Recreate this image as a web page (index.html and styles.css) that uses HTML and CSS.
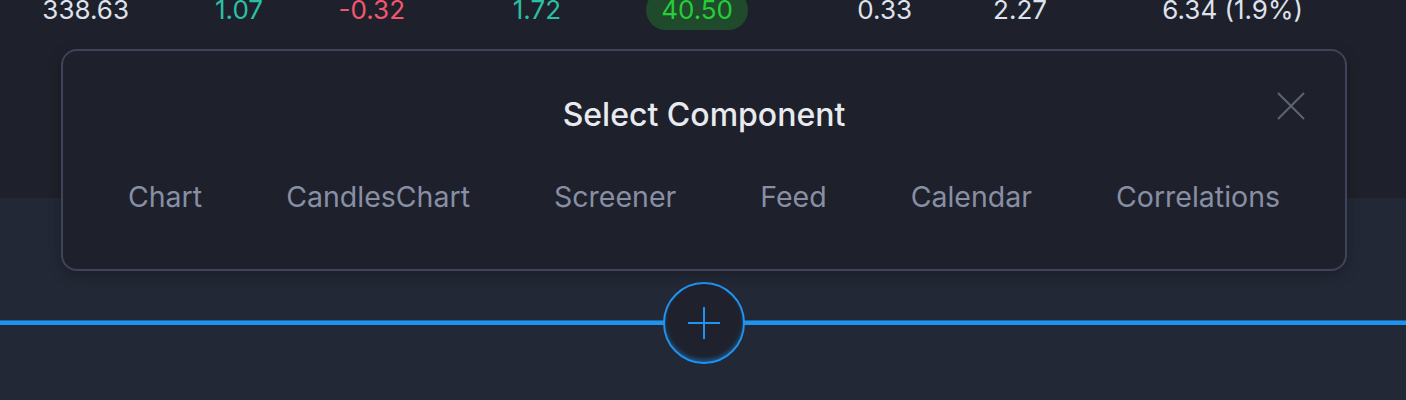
FILE: index.html
```html
<!DOCTYPE html>
<html>
<head>
  <meta charset="UTF-8" />
  <title>Layout</title>
  <link rel="stylesheet" href="styles.css">
</head>
<body>
  <div class="page">
    <div class="stats-panel">
      <div class="stats-row">
        <span class="stat">338.63</span>
        <span class="stat up">1.07</span>
        <span class="stat down">-0.32</span>
        <span class="stat up">1.72</span>
        <span class="stat"><span class="pill">40.50</span></span>
        <span class="stat">0.33</span>
        <span class="stat">2.27</span>
        <span class="stat">6.34 (1.9%)</span>
      </div>
    </div>

    <div class="workspace">
      <div class="splitter">
        <div class="splitter-line"></div>
        <button class="add-btn" aria-label="Add component">
          <svg width="34" height="34" viewBox="0 0 34 34">
            <path d="M17 1v32M1 17h32" stroke="#1f93ef" stroke-width="2" fill="none"/>
          </svg>
        </button>
      </div>
    </div>

    <div class="modal">
      <button class="modal-close" aria-label="Close">
        <svg width="28" height="28" viewBox="0 0 28 28">
          <path d="M1 1l26 26M27 1L1 27" stroke="#5d6376" stroke-width="2" fill="none"/>
        </svg>
      </button>
      <h2 class="modal-title">Select Component</h2>
      <ul class="component-list">
        <li>Chart</li>
        <li>CandlesChart</li>
        <li>Screener</li>
        <li>Feed</li>
        <li>Calendar</li>
        <li>Correlations</li>
      </ul>
    </div>
  </div>
</body>
</html>
```

FILE: styles.css
```css
body {
  margin: 0;
  background: #232836;
  font-family: Inter, "Noto Sans", sans-serif;
  overflow: hidden;
}
.page {
  position: relative;
  width: 1406px;
  height: 400px;
}
.stats-panel {
  background: #1e212b;
  height: 198px;
  overflow: hidden;
}
.stats-row {
  display: grid;
  grid-template-columns: 129px 134px 142px 156px 187px 164px 135px 256px;
  margin-top: -10px;
  height: 40px;
  line-height: 40px;
  font-size: 26px;
  color: #dfe2ec;
}
.stat {
  text-align: right;
}
.stat.up {
  color: #2bbfa4;
}
.stat.down {
  color: #f4566f;
}
.pill {
  display: inline-block;
  background: #1f4a2b;
  color: #27cc3a;
  border-radius: 20px;
  padding: 0 15px;
}
.workspace {
  height: 202px;
  display: flex;
  flex-direction: column;
}
.splitter {
  margin-top: 84px;
  height: 82px;
  display: flex;
  align-items: center;
  justify-content: center;
  position: relative;
}
.splitter-line {
  position: absolute;
  left: 0;
  right: 0;
  top: 38px;
  height: 4px;
  border-top: 1px solid #1c64a6;
  background: #1f93ef;
}
.add-btn {
  position: relative;
  width: 82px;
  height: 82px;
  border-radius: 50%;
  border: 2px solid #1f93ef;
  background: #1f222d;
  box-shadow: inset 0 -3px 4px -1px #1b5a92;
  display: flex;
  align-items: center;
  justify-content: center;
  padding: 0;
  margin-left: 2px;
}
.modal {
  position: absolute;
  left: 61px;
  top: 49px;
  width: 1286px;
  height: 222px;
  box-sizing: border-box;
  background: #1e212b;
  border: 2px solid #40445a;
  border-radius: 16px;
  box-shadow: 0 4px 14px rgba(0,0,0,0.25);
  display: flex;
  flex-direction: column;
  align-items: center;
}
.modal-title {
  margin: 44px 0 0 0;
  font-size: 32px;
  font-weight: 500;
  color: #e9eaf0;
  line-height: 40px;
}
.modal-close {
  position: absolute;
  top: 41px;
  right: 40px;
  background: none;
  border: none;
  padding: 0;
  width: 28px;
  height: 28px;
}
.component-list {
  list-style: none;
  margin: 46px 0 0 0;
  padding: 0;
  display: flex;
  gap: 84px;
  font-size: 28.5px;
  line-height: 32px;
  color: #888fa5;
}
```
